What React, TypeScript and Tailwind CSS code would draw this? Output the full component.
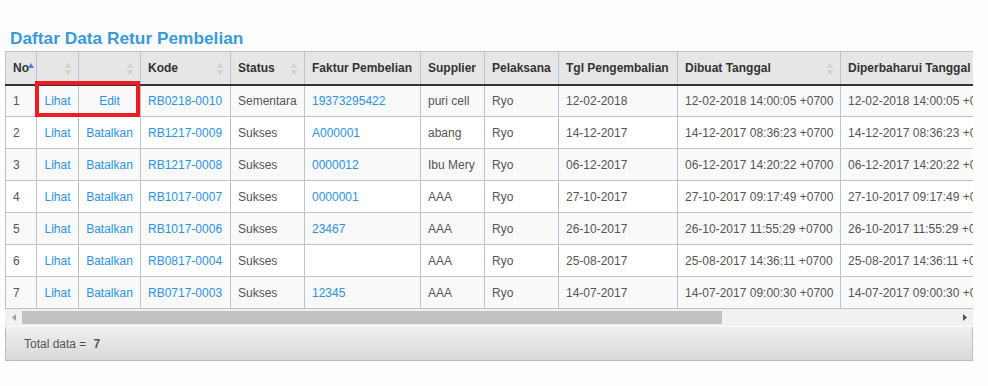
import React from "react";

type Row = {
  no: number;
  aksi: string;
  kode: string;
  status: string;
  faktur: string;
  supplier: string;
  pelaksana: string;
  tgl: string;
  dibuat: string;
  diperbaharui: string;
};

const rows: Row[] = [
  { no: 1, aksi: "Edit", kode: "RB0218-0010", status: "Sementara", faktur: "19373295422", supplier: "puri cell", pelaksana: "Ryo", tgl: "12-02-2018", dibuat: "12-02-2018 14:00:05 +0700", diperbaharui: "12-02-2018 14:00:05 +0700" },
  { no: 2, aksi: "Batalkan", kode: "RB1217-0009", status: "Sukses", faktur: "A000001", supplier: "abang", pelaksana: "Ryo", tgl: "14-12-2017", dibuat: "14-12-2017 08:36:23 +0700", diperbaharui: "14-12-2017 08:36:23 +0700" },
  { no: 3, aksi: "Batalkan", kode: "RB1217-0008", status: "Sukses", faktur: "0000012", supplier: "Ibu Mery", pelaksana: "Ryo", tgl: "06-12-2017", dibuat: "06-12-2017 14:20:22 +0700", diperbaharui: "06-12-2017 14:20:22 +0700" },
  { no: 4, aksi: "Batalkan", kode: "RB1017-0007", status: "Sukses", faktur: "0000001", supplier: "AAA", pelaksana: "Ryo", tgl: "27-10-2017", dibuat: "27-10-2017 09:17:49 +0700", diperbaharui: "27-10-2017 09:17:49 +0700" },
  { no: 5, aksi: "Batalkan", kode: "RB1017-0006", status: "Sukses", faktur: "23467", supplier: "AAA", pelaksana: "Ryo", tgl: "26-10-2017", dibuat: "26-10-2017 11:55:29 +0700", diperbaharui: "26-10-2017 11:55:29 +0700" },
  { no: 6, aksi: "Batalkan", kode: "RB0817-0004", status: "Sukses", faktur: "", supplier: "AAA", pelaksana: "Ryo", tgl: "25-08-2017", dibuat: "25-08-2017 14:36:11 +0700", diperbaharui: "25-08-2017 14:36:11 +0700" },
  { no: 7, aksi: "Batalkan", kode: "RB0717-0003", status: "Sukses", faktur: "12345", supplier: "AAA", pelaksana: "Ryo", tgl: "14-07-2017", dibuat: "14-07-2017 09:00:30 +0700", diperbaharui: "14-07-2017 09:00:30 +0700" },
];

const widths = [31, 42, 62, 90, 74, 116, 64, 74, 119, 163, 164];

const SortIcon = ({ active }: { active?: boolean }) => (
  <svg width="8" height="14" viewBox="0 0 8 14" className="absolute right-[6px] top-[10px]">
    <path d="M4 1 L7.5 6 L0.5 6 Z" fill={active ? "#5a7bd8" : "#d3d3d3"} />
    {!active && <path d="M4 13 L7.5 8 L0.5 8 Z" fill="#d3d3d3" />}
  </svg>
);

const th = "relative h-[33px] border border-[#bcc3c8] border-b-2 border-b-[#333] bg-[#e6e6e6] pl-[7px] pr-[4px] text-left font-bold text-[#333] whitespace-nowrap";
const td = "h-[32px] border border-[#bcc3c8] pl-[7px] pr-[4px] whitespace-nowrap";
const tdc = "h-[32px] border border-[#bcc3c8] px-0 text-center whitespace-nowrap text-[#2b93df]";
const link = "text-[#2b93df]";

export default function App() {
  return (
    <div className="min-h-[386px] w-[988px] bg-[#fdfdfd] pt-[27px] text-[12px] text-[#555]" style={{ fontFamily: '"Liberation Sans", Arial, sans-serif' }}>
      <h2 className="pl-[10px] text-[17.3px] font-bold leading-[22px] text-[#3a9ad9]">Daftar Data Retur Pembelian</h2>
      <div className="ml-[5px] mt-[2px] w-[968px]">
        <div className="relative overflow-hidden">
          <table className="table-fixed border-collapse" style={{ width: 999 }}>
            <colgroup>
              {widths.map((w, i) => (
                <col key={i} style={{ width: w }} />
              ))}
            </colgroup>
            <thead>
              <tr>
                <th className={th}>
                  No<svg width="6" height="6" viewBox="0 0 6 6" className="absolute left-[22px] top-[11px]"><path d="M3 0 L6 5 L0 5 Z" fill="#5a7bd8" /></svg>
                </th>
                <th className={th}><SortIcon /></th>
                <th className={th}><SortIcon /></th>
                <th className={th}>Kode<SortIcon /></th>
                <th className={th}>Status<SortIcon /></th>
                <th className={th}>Faktur Pembelian</th>
                <th className={th}>Supplier</th>
                <th className={th}>Pelaksana</th>
                <th className={th}>Tgl Pengembalian</th>
                <th className={th}>Dibuat Tanggal<SortIcon /></th>
                <th className={th}>Diperbaharui Tanggal</th>
              </tr>
            </thead>
            <tbody>
              {rows.map((r) => (
                <tr key={r.no} className={r.no % 2 === 1 ? "bg-[#f9f9f9]" : "bg-white"}>
                  <td className={td}>{r.no}</td>
                  <td className={tdc}>Lihat</td>
                  <td className={tdc}>{r.aksi}</td>
                  <td className={`${td} ${link}`}>{r.kode}</td>
                  <td className={td}>{r.status}</td>
                  <td className={`${td} ${link}`}>{r.faktur}</td>
                  <td className={td}>{r.supplier}</td>
                  <td className={td}>{r.pelaksana}</td>
                  <td className={td}>{r.tgl}</td>
                  <td className={td}>{r.dibuat}</td>
                  <td className={td}>{r.diperbaharui}</td>
                </tr>
              ))}
            </tbody>
          </table>
          <div className="pointer-events-none absolute left-[30px] top-[30px] h-[36px] w-[105px] border-4 border-[#ed1c24]" />
        </div>
        <div className="flex h-[17px] items-center bg-[#f1f1f1]">
          <div className="flex w-[17px] justify-center">
            <svg width="4" height="7" viewBox="0 0 4 7"><path d="M4 0 L0 3.5 L4 7 Z" fill="#a3a3a3" /></svg>
          </div>
          <div className="h-[13px] w-[700px] bg-[#c1c1c1]" />
          <div className="flex-1" />
          <div className="flex w-[17px] justify-center">
            <svg width="4" height="7" viewBox="0 0 4 7"><path d="M0 0 L4 3.5 L0 7 Z" fill="#505050" /></svg>
          </div>
        </div>
        <div className="mt-[1px] flex h-[34px] items-center border border-t-0 border-[#b7bfc5] bg-gradient-to-b from-[#f0f0f0] to-[#d9d9d9] pl-[18px] text-[#555]">
          Total data =<span className="ml-[7px] font-bold">7</span>
        </div>
      </div>
    </div>
  );
}
